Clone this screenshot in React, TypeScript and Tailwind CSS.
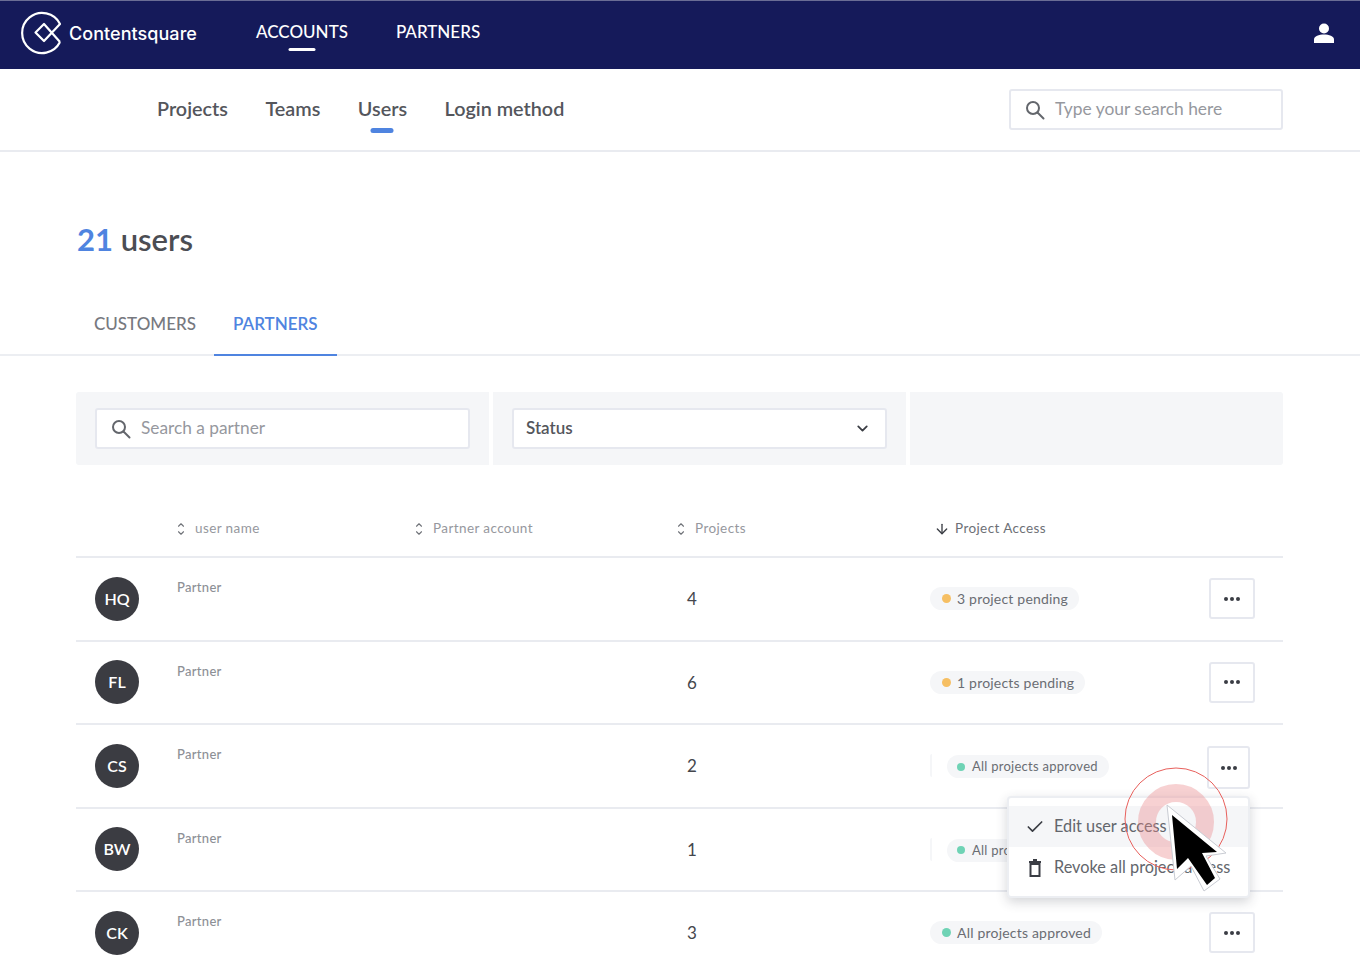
import React from "react";
import { ChevronDown, ChevronUp, ArrowDown, Check } from "lucide-react";

const Sort = () => (
  <span className="flex flex-col items-center -space-y-[2px] text-[#6f7278]">
    <ChevronUp size={10} strokeWidth={2.6} />
    <ChevronDown size={10} strokeWidth={2.6} />
  </span>
);

const SearchGlyph = () => (
  <svg width="20" height="20" viewBox="0 0 20 20" fill="none" stroke="#63666c" strokeWidth="2" className="shrink-0">
    <circle cx="8" cy="8" r="6" />
    <path d="M12.500 12.500 L18.500 18.500" strokeLinecap="round" />
  </svg>
);

const Dots = () => (
  <span className="flex gap-[2px]">
    <span className="w-[4px] h-[4px] rounded-full bg-[#3a3d44]" />
    <span className="w-[4px] h-[4px] rounded-full bg-[#3a3d44]" />
    <span className="w-[4px] h-[4px] rounded-full bg-[#3a3d44]" />
  </span>
);

type RowProps = {
  initials: string;
  count: string;
  status: string;
  dot: string;
  patched?: boolean;
  small?: boolean;
  hideButton?: boolean;
};

const Row = ({ initials, count, status, dot, patched, small, hideButton }: RowProps) => (
  <div className="flex items-center h-[83.5px] border-b-2 border-[#e9ebf0] last:border-b-0 last:pb-[2px]">
    <div className="w-[101px] pl-[19px] shrink-0">
      <div className="w-[44px] h-[44px] rounded-full bg-[#3b3c42] text-white flex items-center justify-center text-[16px] font-semibold">
        {initials}
      </div>
    </div>
    <div className="w-[510px] shrink-0 self-start pt-[20px] text-[13px] leading-[18px] text-[#8d9096] font-medium tracking-[0.3px]">
      Partner
    </div>
    <div className="w-[243px] shrink-0 text-[17px] text-[#44464c]">{count}</div>
    <div className="w-[279px] shrink-0 flex items-center">
      {patched && <span className="w-[2px] h-[23px] mr-[15px] rounded-l-full bg-[#f5f6f8]" />}
      {patched ? (
        <span className="inline-flex items-center h-[23px] mt-[2px] pl-[10px] pr-[11px] rounded-full bg-[#f5f6f8] text-[13px] text-[#6a6d73] tracking-[0.25px]">
          <span className="w-[8px] h-[8px] rounded-full mr-[7px]" style={{ background: dot }} />
          {status}
        </span>
      ) : (
        <span className="inline-flex items-center h-[23px] pl-[12px] pr-[11px] rounded-full bg-[#f5f6f8] text-[14px] text-[#6a6d73] tracking-[0.2px]">
          <span className="w-[9px] h-[9px] rounded-full mr-[6px]" style={{ background: dot }} />
          {status}
        </span>
      )}
    </div>
    {!hideButton && (
      <div
        className={
          small
            ? "-ml-[2px] mt-[4px] w-[43px] h-[43px] rounded-[3px] border-2 border-[#e6e8ef] bg-white flex items-center justify-center"
            : "w-[46px] h-[41px] rounded-[3px] border-2 border-[#e6e8ef] bg-white flex items-center justify-center"
        }
      >
        <Dots />
      </div>
    )}
  </div>
);

export default function App() {
  return (
    <div className="relative w-[1360px] h-[980px] overflow-hidden bg-white font-['Lato','Open_Sans',sans-serif]">
      <header className="h-[69px] bg-[#151a5a] border-t border-[#6a6d95] flex items-center relative">
        <svg width="48" height="52" viewBox="18 8 48 52" className="ml-[20px] shrink-0 -mt-[2px]">
          <path
            d="M58 42 A20 20 0 1 1 58 24 L42 41 L33.5 32.5 L42 24 L58 42"
            fill="none"
            stroke="white"
            strokeWidth="2.2"
            strokeLinejoin="round"
          />
        </svg>
        <span className="ml-[1px] text-[18px] font-medium text-white font-['Inter',sans-serif] tracking-[0.05px] -mt-[4px] w-[129px] whitespace-nowrap">
          Contentsquare
        </span>
        <nav className="ml-[58px] flex gap-[48px] text-[17px] text-white font-medium -mt-[6px]">
          <span className="relative">
            ACCOUNTS
            <span className="absolute left-1/2 -translate-x-1/2 top-[29px] w-[27px] h-[3px] rounded-full bg-white" />
          </span>
          <span>PARTNERS</span>
        </nav>
        <svg width="20" height="20" viewBox="0 0 20 20" className="ml-auto mr-[26px] -mt-[5px]" fill="white">
          <circle cx="10" cy="5.500" r="5" />
          <path d="M0 20 V16.500 C0 13 5 11.500 10 11.500 C15 11.500 20 13 20 16.500 V20 Z" />
        </svg>
      </header>

      <div className="h-[83px] border-b-2 border-[#e9ebf0] flex items-center justify-between pl-[157px] pr-[77px]">
        <nav className="flex gap-[37.500px] text-[19.800px] font-semibold text-[#54565c] -mt-[2px]">
          <span>Projects</span>
          <span>Teams</span>
          <span className="relative">
            Users
            <span className="absolute left-1/2 -translate-x-1/2 top-[34px] w-[23px] h-[5px] rounded-full bg-[#4f84e0]" />
          </span>
          <span>Login method</span>
        </nav>
        <div className="w-[274px] h-[41px] rounded-[3px] border-2 border-[#e6e8ef] flex items-center pl-[14px] gap-[10px] text-[17.400px] text-[#96989e]">
          <SearchGlyph />
          <span className="-mt-[1px]">Type your search here</span>
        </div>
      </div>

      <h1 className="ml-[77px] mt-[67px] h-[40px] text-[31px] leading-[40px] font-semibold text-[#4b4d53]">
        <span className="text-[#4f84e0] font-bold">21</span> users
      </h1>

      <div className="mt-[38px] h-[59px] border-b-2 border-[#eceef2] pl-[76px] flex">
        <div className="h-[58px] px-[18px] flex items-center text-[17px] font-medium text-[#77797f] pb-[4px]">
          CUSTOMERS
        </div>
        <div className="h-[59px] px-[19px] flex items-center text-[17px] font-semibold text-[#4f84e0] border-b-2 border-[#4f84e0] pb-[4px]">
          PARTNERS
        </div>
      </div>

      <div className="ml-[76px] w-[1207px] mt-[36px] flex gap-[4px] h-[73px]">
        <div className="w-[413px] bg-[#f5f6f8] rounded-l-[3px] flex items-center pl-[19px]">
          <div className="w-[375px] h-[41px] bg-white rounded-[3px] border-2 border-[#e6e8ef] flex items-center pl-[14px] gap-[10px] text-[17.300px] text-[#96989e]">
            <SearchGlyph />
            <span className="-mt-[1px]">Search a partner</span>
          </div>
        </div>
        <div className="w-[413px] bg-[#f5f6f8] flex items-center pl-[19px]">
          <div className="w-[375px] h-[41px] bg-white rounded-[3px] border-2 border-[#e6e8ef] flex items-center justify-between pl-[12px] pr-[14px] text-[17px] font-semibold text-[#54565c]">
            <span className="-mt-[1px]">Status</span>
            <ChevronDown size={17} strokeWidth={2.5} className="text-[#3a3d44]" />
          </div>
        </div>
        <div className="flex-1 bg-[#f5f6f8] rounded-r-[3px]" />
      </div>

      <div className="ml-[76px] w-[1207px]">
        <div className="flex items-center h-[93px] border-b-2 border-[#e9ebf0] text-[13.500px] text-[#96989e] tracking-[0.4px] pt-[36px]">
          <div className="ml-[100px] w-[238px] flex items-center gap-[9px]">
            <Sort />
            <span>user name</span>
          </div>
          <div className="w-[262px] flex items-center gap-[9px]">
            <Sort />
            <span>Partner account</span>
          </div>
          <div className="w-[258px] flex items-center gap-[9px]">
            <Sort />
            <span>Projects</span>
          </div>
          <div className="flex items-center gap-[5px] text-[#6d7076]">
            <ArrowDown size={16} strokeWidth={2} className="text-[#3a3d44]" />
            <span>Project Access</span>
          </div>
        </div>
        <Row initials="HQ" count="4" status="3 project pending" dot="#f6bf63" />
        <Row initials="FL" count="6" status="1 projects pending" dot="#f6bf63" />
        <Row initials="CS" count="2" status="All projects approved" dot="#6fd3b5" patched small />
        <Row initials="BW" count="1" status="All projects approved" dot="#6fd3b5" patched hideButton />
        <Row initials="CK" count="3" status="All projects approved" dot="#6fd3b5" />
      </div>

      {/* action menu */}
      <div className="absolute left-[1007px] top-[796px] w-[243px] h-[102px] bg-white rounded-[4px] border-2 border-[#eceef2] shadow-[0_4px_12px_rgba(40,44,60,0.2)] py-[8px] text-[16.300px] text-[#63666c]">
        <div className="h-[41px] bg-[#f5f6f8] flex items-center pl-[16px] gap-[9px]">
          <Check size={20} strokeWidth={2} className="text-[#3a3d44]" />
          <span className="-mt-[1px]">Edit user access</span>
        </div>
        <div className="h-[41px] flex items-center pl-[17px] gap-[10px] whitespace-nowrap">
          <svg width="18" height="18" viewBox="0 0 18 18" fill="none" stroke="#3a3d44" strokeWidth="2">
            <path d="M3 3h12M7 1h4M4.500 5v12h9V5z" />
          </svg>
          <span className="-mt-[1px]">Revoke all project access</span>
        </div>
      </div>

      {/* click indicator and cursor */}
      <svg
        className="absolute left-[1115px] top-[760px] pointer-events-none"
        width="130"
        height="140"
        viewBox="1115 760 130 140"
      >
        <circle cx="1176" cy="819" r="51" fill="none" stroke="#e8605c" strokeWidth="1" />
        <circle cx="1176" cy="822" r="29" fill="none" stroke="#e9878a" strokeOpacity="0.38" strokeWidth="18" />
        <path
          d="M1167 805 L1226 853 L1206 856 L1220 879 L1204 891 L1191 866 L1175 880 Z"
          fill="white"
          stroke="#c9ccd3"
          strokeWidth="1"
          strokeLinejoin="round"
        />
        <path
          d="M1172 815 L1217 852 L1202 853 L1215 878 L1207 885 L1188 858 L1177 869 Z"
          fill="black"
        />
      </svg>
    </div>
  );
}
